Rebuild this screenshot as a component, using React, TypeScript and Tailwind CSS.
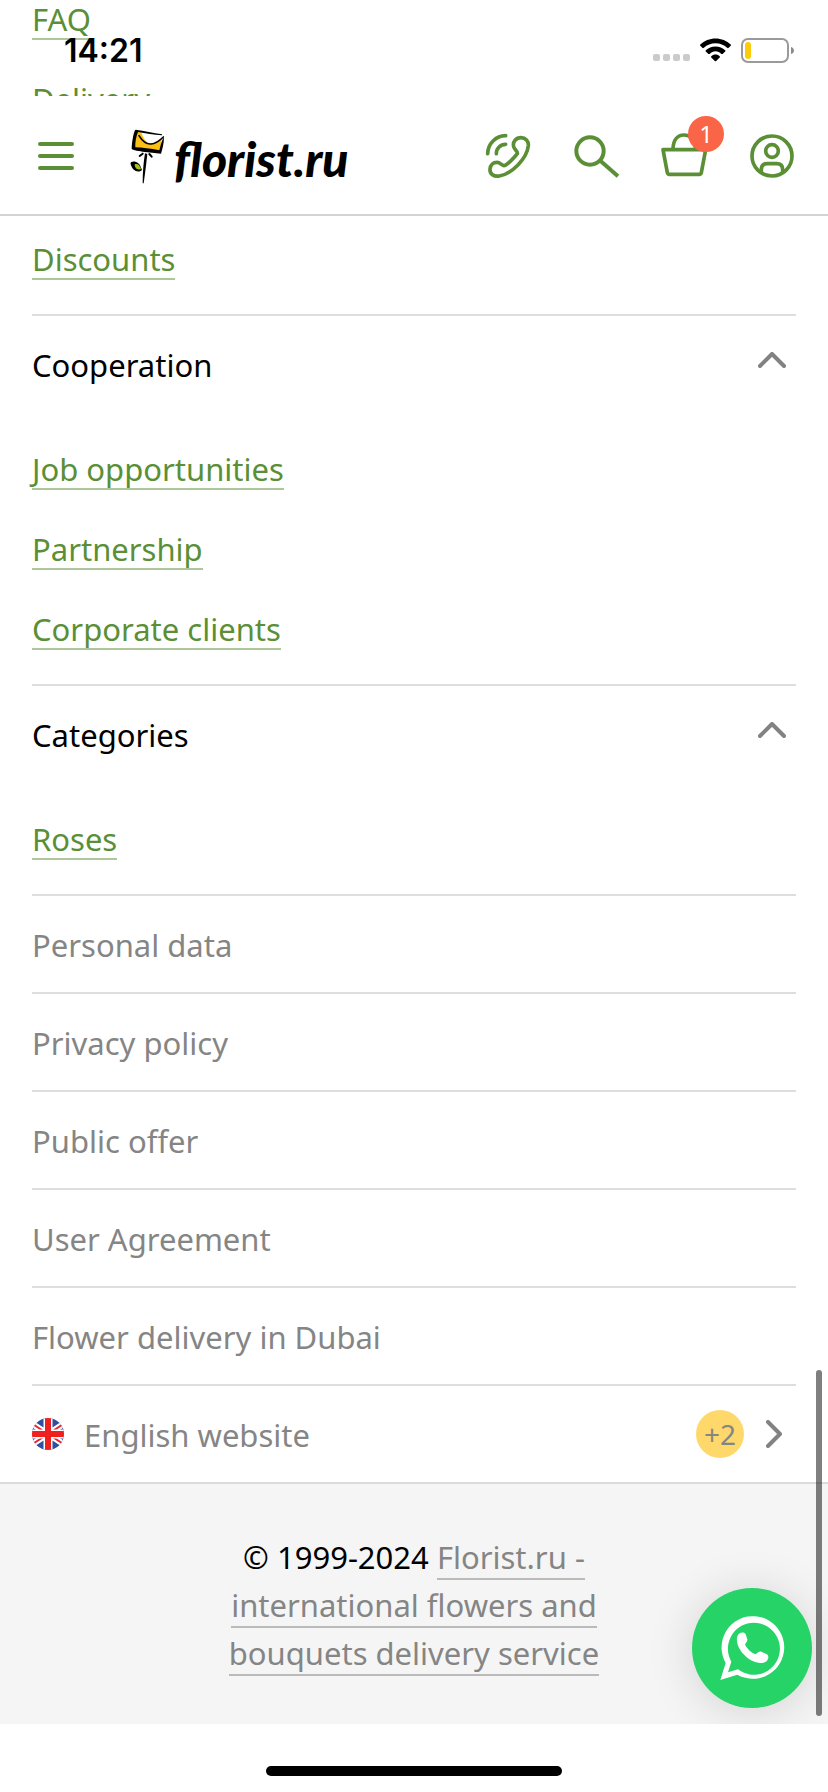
import React from 'react';
import { clsx } from 'clsx';

const topLinks = ['FAQ', 'Delivery'];

const sections = [
    { title: 'Cooperation', links: ['Job opportunities', 'Partnership', 'Corporate clients'] },
    { title: 'Categories', links: ['Roses'] },
];

const legalLinks = ['Personal data', 'Privacy policy', 'Public offer', 'User Agreement', 'Flower delivery in Dubai'];

const StatusBar: React.FC = () => (
    <div className="absolute inset-x-0 top-0 h-24 pl-16 pr-[34px] flex items-center justify-between">
        <span className="pt-1.5 font-['Inter',sans-serif] text-[32px] leading-10 font-semibold text-black">14:21</span>
        <div className="flex items-center gap-2.5 pt-1">
            <svg className="w-[37px] h-6" viewBox="0 0 37 24" fill="#cbcbcb">
                <rect x="0" y="16" width="7" height="7" rx="2" />
                <rect x="10" y="16" width="7" height="7" rx="2" />
                <rect x="20" y="16" width="7" height="7" rx="2" />
                <rect x="30" y="16" width="7" height="7" rx="2" />
            </svg>
            <svg className="w-[31px] h-6" viewBox="0 0 96 72" fill="#000">
                <path d="M48 0C66 0 83 7 95 19Q97 21 95 23L88 30Q86 31 84 29C74 20 62 15 48 15S22 20 12 29Q10 31 8 30L1 23Q-1 21 1 19C13 7 30 0 48 0Z" />
                <path d="M48 25C60 25 70 29 78 37Q80 39 78 41L70 48Q68 49 66 48C61 43 55 40 48 40S35 43 30 48Q28 49 26 48L18 41Q16 39 18 37C26 29 36 25 48 25Z" />
                <path d="M48 50C53 50 58 52 61 55Q63 57 61 59L50 70Q48 72 46 70L35 59Q33 57 35 55C38 52 43 50 48 50Z" />
            </svg>
            <svg className="w-[53px] h-[25px]" viewBox="0 0 53 25" fill="none">
                <rect x="1" y="1" width="46" height="23" rx="6" stroke="#9a9a9a" strokeWidth="2" />
                <rect x="4" y="4" width="6" height="17" rx="3" fill="#fccc0a" />
                <path d="M50 9C52 9.500 53 11 53 12.500S52 15.500 50 16Z" fill="#8c8c8c" />
            </svg>
        </div>
    </div>
);

const Logo: React.FC = () => (
    <a href="#" aria-label="florist.ru" className="flex items-center gap-1.5 text-black">
        <svg className="w-10 h-14 shrink-0" viewBox="0 0 120 168" fill="none">
            <path d="M24 11L102 21L97 74L17 64Z" fill="#fbbf16" />
            <path d="M40 13L104 21L103 32C92 44 79 49 66 47C52 43 45 29 40 13Z" fill="#fff" />
            <path d="M33 23C42 38 53 49 69 48C85 47 96 37 106 27" stroke="#000" strokeWidth="5" strokeLinecap="round" />
            <path d="M102 19C76 15 49 9 23 5C18 6 12 37 11 62C13 69 68 73 99 77C104 62 108 44 108 27C101 37 98 51 94 67C68 62 42 59 22 58C21 44 24 27 30 12C53 16 77 20 102 22Z" fill="#000" />
            <path d="M51 76L58 78C55 105 51 138 47 166H44C44 137 46 105 51 76Z" fill="#000" />
            <path d="M44 77L35 84M64 78L71 86" stroke="#000" strokeWidth="6" strokeLinecap="round" />
            <path d="M10 102C20 97 34 104 38 116L42 126C29 137 13 127 8 109Q6 104 10 102Z" fill="#000" />
            <path d="M20 109C29 106 36 112 39 123C29 128 20 121 20 109Z" fill="#a3c614" />
        </svg>
        <span className="pt-1.5 font-['Lato',sans-serif] text-[48px] leading-[56px] font-black italic">florist.ru</span>
    </a>
);

const Header: React.FC = () => (
    <header className="h-[120px] pl-[38px] pr-[34px] pt-0.5 flex items-center justify-between border-b-2 border-[#d4d4d4] bg-white">
        <div className="flex items-center gap-[54px]">
            <button type="button" aria-label="Menu" className="w-9 flex flex-col gap-2">
                <span className="h-1 rounded-full bg-[#5b8f36]" />
                <span className="h-1 rounded-full bg-[#5b8f36]" />
                <span className="h-1 rounded-full bg-[#5b8f36]" />
            </button>
            <Logo />
        </div>
        <div className="flex items-center gap-11 text-[#5b8f36]">
            <button type="button" aria-label="Call back">
                <svg className="size-11 overflow-visible" viewBox="0 0 132 132" fill="none" stroke="currentColor" strokeWidth="11" strokeLinecap="round" strokeLinejoin="round">
                    <path d="M59 5A55 55 0 0 0 5 59M59 31A28 28 0 0 0 31 59" />
                    <path d="M83 38C79 22 91 11 105 11C119 11 128 21 127 35C123 74 77 120 40 126C23 129 11 119 12 106C13 92 22 85 33 85C43 85 46 94 54 95C61 95 86 70 94 59C97 53 85 47 83 38Z" />
                </svg>
            </button>
            <button type="button" aria-label="Search">
                <svg className="size-11 overflow-visible" viewBox="0 0 132 132" fill="none" stroke="currentColor" strokeWidth="12">
                    <circle cx="48" cy="51" r="41" />
                    <path d="M79 80L132 127" />
                </svg>
            </button>
            <button type="button" aria-label="Basket" className="relative">
                <svg className="size-11 overflow-visible" viewBox="0 0 132 132" fill="none" stroke="currentColor" strokeWidth="11" strokeLinejoin="round">
                    <path d="M3 47H131L118 116Q117 121 112 121H22Q17 121 16 116Z" />
                    <path d="M33 44C34 18 46 3 66 3C86 3 98 18 101 44" />
                </svg>
                <span className="absolute -top-[18px] -right-[18px] size-9 rounded-full bg-[#fb6547] text-2xl leading-9 text-center text-white">1</span>
            </button>
            <button type="button" aria-label="Account">
                <svg className="size-11" viewBox="0 0 132 132" fill="none" stroke="currentColor" strokeWidth="11">
                    <circle cx="66" cy="66" r="60" />
                    <circle cx="66" cy="51" r="19" />
                    <path d="M34 116V107Q34 89 52 89H80Q98 89 98 107V116" />
                </svg>
            </button>
        </div>
    </header>
);

const FooterLink: React.FC<{ label: string }> = ({ label }) => (
    <li className="h-20 pt-0.5 flex items-center">
        <a href="#" className="pt-0.5 border-b-2 border-[#adc79b] leading-[38px] text-[#5b8f36]">{label}</a>
    </li>
);

const Chevron: React.FC<{ direction: 'up' | 'right' }> = ({ direction }) => (
    <svg
        className={clsx('text-[#828282]', direction === 'up' ? 'w-7 h-4' : 'w-4 h-7')}
        viewBox={direction === 'up' ? '0 0 28 16' : '0 0 16 28'}
        fill="none"
        stroke="currentColor"
        strokeWidth="4"
        strokeLinecap="round"
        strokeLinejoin="round"
    >
        <path d={direction === 'up' ? 'M2 14L14 2L26 14' : 'M2 2L14 14L2 26'} />
    </svg>
);

const UkFlag: React.FC = () => (
    <svg className="size-8" viewBox="0 0 32 32">
        <clipPath id="flag">
            <circle cx="16" cy="16" r="16" />
        </clipPath>
        <g clipPath="url(#flag)">
            <path d="M0 0H32V32H0Z" fill="#2f4f9f" />
            <path d="M-4 3L36 29M-4 29L36 3" stroke="#fff" strokeWidth="6" />
            <path d="M-4 3L36 29M-4 29L36 3" stroke="#e8232e" strokeWidth="2" />
            <path d="M16 0V32M0 16H32" stroke="#fff" strokeWidth="9" />
            <path d="M16 0V32M0 16H32" stroke="#f0201f" strokeWidth="6" />
        </g>
    </svg>
);

const WhatsAppButton: React.FC = () => (
    <a
        href="#"
        aria-label="WhatsApp"
        className="absolute right-4 bottom-4 size-[120px] rounded-full bg-[#25d366] flex items-center justify-center shadow-[0_4px_48px_rgba(0,0,0,0.14)]"
    >
        <svg className="size-16 overflow-visible" viewBox="0 0 192 192" fill="#fff">
            <path fillRule="evenodd" d="M1 192L17 141A94 94 0 1 1 52 176ZM34 137L24 169L54 160A78 78 0 1 0 34 137Z" />
            <path d="M52 61C55 48 74 46 77 55L82 70C83 77 77 81 75 86C82 99 93 109 106 115C112 112 117 105 124 107L139 114C149 118 146 135 134 139C115 147 87 133 71 115C56 98 47 78 52 61Z" />
        </svg>
    </a>
);

const App: React.FC = () => {
    return (
        <div className="relative min-h-screen bg-white font-['Noto_Sans',sans-serif] text-[31px] leading-10 text-black">
            <div className="h-24 px-8 overflow-hidden">
                <ul className="-mt-[22px]">
                    {topLinks.map(label => <FooterLink key={label} label={label} />)}
                </ul>
            </div>
            <StatusBar />
            <Header />

            <div className="relative">
                <main className="px-8 pt-0.5">
                    <ul className="pb-4">
                        <FooterLink label="Discounts" />
                    </ul>
                    {sections.map(section => (
                        <section key={section.title} className="border-t-2 border-[#dedede]">
                            <h2>
                                <button type="button" aria-expanded="true" className="w-full h-24 pt-0.5 pr-2.5 flex items-center justify-between">
                                    {section.title}
                                    <span className="pb-2.5"><Chevron direction="up" /></span>
                                </button>
                            </h2>
                            <ul className="py-4">
                                {section.links.map(label => <FooterLink key={label} label={label} />)}
                            </ul>
                        </section>
                    ))}
                    <nav className="text-[#858585]">
                        {legalLinks.map(label => (
                            <a key={label} href="#" className="h-[98px] pt-0.5 flex items-center border-t-2 border-[#dedede]">{label}</a>
                        ))}
                        <a href="#" className="h-[98px] pr-3.5 flex items-center border-t-2 border-[#dedede]">
                            <UkFlag />
                            <span className="pl-5 pt-0.5">English website</span>
                            <span className="ml-auto mr-[22px] size-12 rounded-full bg-[#ffd86b] text-[28px] leading-12 text-center">+2</span>
                            <Chevron direction="right" />
                        </a>
                    </nav>
                </main>

                <footer className="relative overflow-hidden border-t-2 border-[#dbdbdb] bg-[#f5f5f5] pt-[49px] pb-[47px] leading-12 text-center">
                    <p className="max-w-[400px] mx-auto">
                        © 1999-2024{' '}
                        <a href="#" className="border-b-2 border-[#bababa] text-[#858585]">
                            Florist.ru - international flowers and bouquets delivery service
                        </a>
                    </p>
                    <WhatsAppButton />
                </footer>
                <div className="absolute right-1.5 bottom-2 w-1.5 h-[346px] rounded-full bg-black/50" />
            </div>

            <div className="h-[68px] flex justify-center items-end pb-4">
                <div className="w-[296px] h-2.5 rounded-full bg-black" />
            </div>
        </div>
    );
};

export default App;
